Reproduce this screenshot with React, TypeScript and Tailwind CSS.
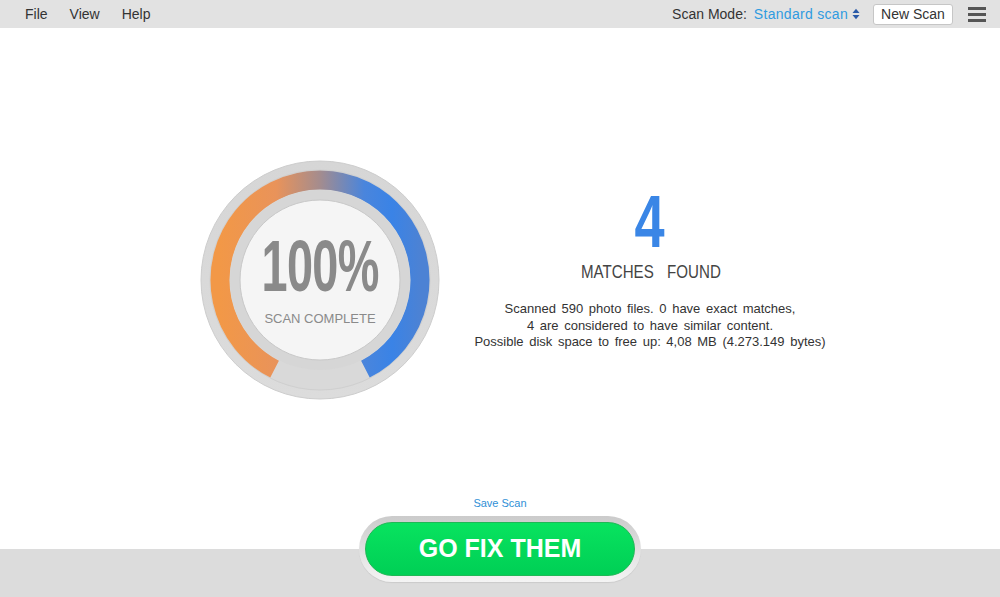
const menu = ["File", "View", "Help"];

function SortArrows() {
  return (
    <svg width="8" height="12" viewBox="0 0 8 12" className="ml-[4px]">
      <path d="M0.5 5 L4 0.8 L7.5 5 Z" fill="#2a5aa8" />
      <path d="M0.5 7 L4 11.2 L7.5 7 Z" fill="#2a5aa8" />
    </svg>
  );
}

function Gauge() {
  return (
    <div className="relative h-[240px] w-[240px] shrink-0">
      <svg width="240" height="240" viewBox="0 0 240 240">
        <defs>
          <linearGradient id="arc" x1="0" y1="0" x2="1" y2="0">
            <stop offset="0" stopColor="#f29847" />
            <stop offset="0.28" stopColor="#e9935a" />
            <stop offset="0.5" stopColor="#a48c8e" />
            <stop offset="0.72" stopColor="#4a85dc" />
            <stop offset="0.86" stopColor="#3a83e6" />
            <stop offset="1" stopColor="#4c82d4" />
          </linearGradient>
          <linearGradient id="rim" x1="0" y1="0" x2="0" y2="1">
            <stop offset="0" stopColor="#d6d6d6" />
            <stop offset="1" stopColor="#dcdcdc" />
          </linearGradient>
        </defs>
        <circle cx="120" cy="120" r="119" fill="url(#rim)" stroke="#cdcdcd" strokeWidth="1" />
        <circle cx="120" cy="120" r="110" fill="#d9d9d9" stroke="#cfcfcf" strokeWidth="1" />
        <path
          d="M 74.6 209.1 A 100 100 0 1 1 165.4 209.1"
          fill="none"
          stroke="url(#arc)"
          strokeWidth="19"
        />
        <circle cx="120" cy="120" r="90" fill="#d6d6d6" />
        <circle cx="120" cy="120" r="80" fill="#f5f5f5" stroke="#c8c8c8" strokeWidth="1" />
      </svg>
      <div className="absolute inset-0 flex flex-col items-center justify-center pb-[6px]">
        <span className="inline-block scale-x-[0.65] text-[72px] font-bold leading-none tracking-[-1px] text-[#8a8a8a]">
          100%
        </span>
        <span className="mt-[10px] text-[13px] leading-none text-[#8a8a8a]">SCAN COMPLETE</span>
      </div>
    </div>
  );
}

export default function App() {
  return (
    <div className="flex h-screen flex-col bg-white font-['Liberation_Sans',Arial,sans-serif] text-[#333]">
      <header className="flex h-7 shrink-0 items-center bg-[#e2e2e2] pl-[25px] pr-[14px] text-[14px]">
        <nav className="flex gap-[22px]">
          {menu.map((m) => (
            <span key={m}>{m}</span>
          ))}
        </nav>
        <div className="ml-auto flex items-center">
          <span>Scan Mode:</span>
          <span className="ml-[7px] tracking-[0.3px] text-[#2f9be0]">Standard scan</span>
          <SortArrows />
          <button className="ml-[13px] h-[21px] w-[80px] rounded-[3px] border border-[#c6c6c6] bg-white text-[14px] leading-none text-[#333]">
            New Scan
          </button>
          <div className="ml-[15px] flex w-[18px] flex-col gap-[3px]">
            <span className="h-[3px] bg-[#555]" />
            <span className="h-[3px] bg-[#555]" />
            <span className="h-[3px] bg-[#555]" />
          </div>
        </div>
      </header>

      <main className="flex flex-1 flex-col">
        <section className="flex items-start justify-center gap-[30px] pl-[30px] pt-[132px]">
          <Gauge />
          <div className="flex w-[360px] flex-col items-center pt-[25px]">
            <span className="inline-block scale-x-[0.73] text-[74px] font-bold leading-none text-[#3a86e6]">
              4
            </span>
            <div className="mt-[4px] flex gap-[16px] text-[18px] leading-none text-[#444]">
              <span className="inline-block scale-x-[0.84]">MATCHES</span>
              <span className="-ml-[14px] inline-block scale-x-[0.84]">FOUND</span>
            </div>
            <p className="mt-[20px] text-center text-[13px] leading-[16.5px] [word-spacing:2px]">
              Scanned 590 photo files. 0 have exact matches,
              <br />
              4 are considered to have similar content.
              <br />
              Possible disk space to free up: 4,08 MB (4.273.149 bytes)
            </p>
          </div>
        </section>

        <div className="mt-auto mb-[6px] text-center text-[11px] leading-[13px] text-[#2f8fd6]">Save Scan</div>
      </main>

      <footer className="flex h-[81px] shrink-0 justify-center bg-[linear-gradient(to_bottom,#ffffff_33px,#dcdcdc_33px)]">
        <div className="h-[66px] w-[282px] rounded-full bg-[linear-gradient(to_bottom,#cbcbcb,#e4e4e4_60%,#f4f4f4)] p-[6px] shadow-[0_1px_1px_rgba(0,0,0,0.08)]">
          <button className="flex h-full w-full items-center justify-center rounded-full border border-[#1fb855] bg-[linear-gradient(to_bottom,#08e35f,#00cf55)] text-[25px] font-bold text-white">
            GO FIX THEM
          </button>
        </div>
      </footer>
    </div>
  );
}
